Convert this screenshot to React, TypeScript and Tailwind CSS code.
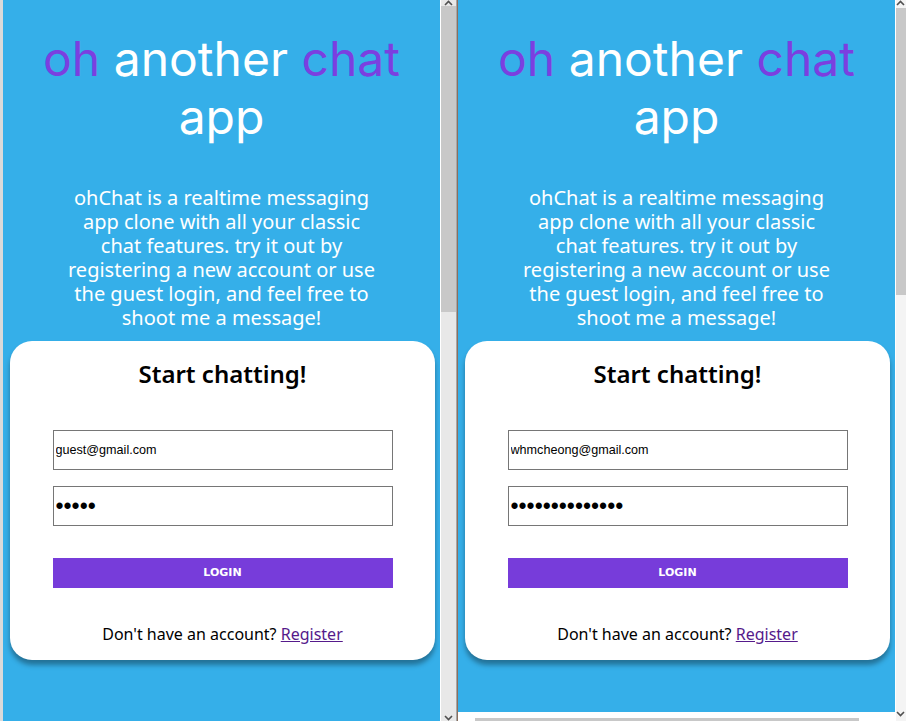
import React from 'react';

type PaneProps = {
  email: string;
  password: string;
};

function Pane({ email, password }: PaneProps) {
  return (
    <div className="w-[437px] h-full bg-[#35afe9] flex flex-col items-center shrink-0 overflow-hidden">
      {/* Heading */}
      <h1 className="mt-[30px] text-center text-[48px] leading-[58px] text-white font-['Inter',sans-serif]">
        <span className="text-[#7b3fe0]">oh</span> another <span className="text-[#7b3fe0]">chat</span>
        <br />
        app
      </h1>

      {/* Blurb */}
      <p className="mt-[40px] text-center text-[20px] leading-[24px] text-white font-['Noto_Sans',sans-serif]">
        ohChat is a realtime messaging
        <br />
        app clone with all your classic
        <br />
        chat features. try it out by
        <br />
        registering a new account or use
        <br />
        the guest login, and feel free to
        <br />
        shoot me a message!
      </p>

      {/* Login card */}
      <div className="mt-[11px] ml-[2px] w-[425px] bg-white rounded-[22px] shadow-[0_5px_5px_rgba(0,0,0,0.35)] flex flex-col items-center pt-[13px] pb-[14px]">
        <h2 className="text-[24px] leading-[40px] font-semibold text-black font-['Noto_Sans',sans-serif]">Start chatting!</h2>
        <form className="mt-[36px] w-[340px] flex flex-col" onSubmit={(e) => e.preventDefault()}>
          <input
            type="text"
            defaultValue={email}
            className="h-[40px] border border-[#767676] px-[2px] text-[12.6px] text-black font-['Liberation_Sans',sans-serif] outline-none"
          />
          <input
            type="password"
            defaultValue={password}
            className="mt-[16px] h-[40px] border border-[#767676] px-[2px] text-[23px] text-black font-['Liberation_Sans',sans-serif] outline-none"
          />
          <button
            type="submit"
            className="mt-[32px] h-[30px] bg-[#773cda] text-white text-[11px] font-bold font-['DejaVu_Sans',sans-serif]"
          >
            LOGIN
          </button>
        </form>
        <p className="mt-[34px] text-[16px] leading-[24px] text-black font-['Noto_Sans',sans-serif]">
          Don't have an account?{' '}
          <a href="#" className="text-[#551a8b] underline">
            Register
          </a>
        </p>
      </div>
    </div>
  );
}

function Chevron({ up }: { up?: boolean }) {
  return (
    <svg width="9" height="6" viewBox="0 0 9 6" className="block">
      <path
        d={up ? 'M1 5 L4.5 1.5 L8 5' : 'M1 1 L4.5 4.5 L8 1'}
        fill="none"
        stroke="#505050"
        strokeWidth="1.6"
      />
    </svg>
  );
}

export default function App() {
  return (
    <div className="w-[906px] h-[721px] bg-white flex overflow-hidden">
      <div className="w-[3px] h-full bg-[#dadada] shrink-0" />
      <Pane email="guest@gmail.com" password="guest" />

      {/* left pane scrollbar */}
      <div className="w-px h-full bg-white shrink-0" />
      <div className="w-[15px] h-full bg-[#e8e8e8] shrink-0 flex flex-col items-center">
        <div className="h-[6px] flex items-start justify-center overflow-hidden">
          <Chevron up />
        </div>
        <div className="w-[15px] h-[306px] bg-[#c8c8c8]" />
        <div className="flex-1" />
        <div className="h-[8px] flex items-end justify-center">
          <Chevron />
        </div>
      </div>
      <div className="w-px h-full bg-[#a6a6a6] shrink-0" />
      <div className="w-px h-full bg-[#8a6f5e] shrink-0" />

      {/* right pane */}
      <div className="flex flex-col h-full shrink-0">
        <div className="h-[712px]">
          <Pane email="whmcheong@gmail.com" password="whmcheong12345" />
        </div>
        <div className="flex-1 bg-white flex items-end">
          <div className="ml-[17px] w-[384px] h-[3px] bg-[#c8c8c8]" />
        </div>
      </div>
      <div className="w-px h-full bg-white shrink-0" />
      <div className="flex-1 h-full bg-[#f4f4f4] flex flex-col">
        <div className="h-[8px] flex items-start overflow-hidden">
          <Chevron up />
        </div>
        <div className="h-[287px] bg-[#c8c8c8]" />
        <div className="flex-1" />
        <div className="h-[10px] flex items-start overflow-hidden">
          <Chevron />
        </div>
      </div>
    </div>
  );
}
